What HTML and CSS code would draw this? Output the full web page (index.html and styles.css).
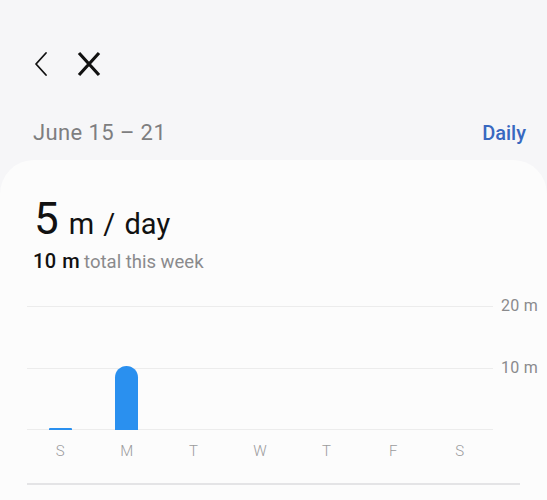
FILE: index.html
```html
<!DOCTYPE html>
<html>
<head>
<meta charset="utf-8">
<link rel="stylesheet" href="styles.css">
</head>
<body>
<div class="toolbar">
  <svg class="ic-back" width="16" height="26" viewBox="0 0 16 26"><path d="M13 2 L3 13 L13 24" fill="none" stroke="#111" stroke-width="1.8" stroke-linecap="round" stroke-linejoin="round"/></svg>
  <svg class="ic-close" width="24" height="26" viewBox="0 0 24 26"><path d="M2 2 L22 24 M22 2 L2 24" fill="none" stroke="#111" stroke-width="3.2" stroke-linecap="butt"/></svg>
</div>
<div class="range-row">
  <span class="range">June 15 – 21</span>
  <span class="mode">Daily</span>
</div>
<div class="card">
  <div class="avg"><span class="big">5</span><span class="unit">m / day</span></div>
  <div class="total"><span class="tval">10 m</span> <span class="tlabel">total this week</span></div>
  <div class="chart">
    <div class="plot">
      <div class="grid">
        <div class="gline"></div>
        <div class="gline"></div>
      </div>
      <div class="bars">
        <div class="col"><div class="bar bar-min" style="height:2px"></div></div>
        <div class="col"><div class="bar" style="height:64px"></div></div>
        <div class="col"></div>
        <div class="col"></div>
        <div class="col"></div>
        <div class="col"></div>
        <div class="col"></div>
      </div>
    </div>
    <div class="axis">
      <span>20 m</span>
      <span>10 m</span>
    </div>
  </div>
  <div class="days">
    <span>S</span><span>M</span><span>T</span><span>W</span><span>T</span><span>F</span><span>S</span>
  </div>
  <div class="divider"></div>
</div>
</body>
</html>
```
FILE: styles.css
```css
html, body {
  margin: 0;
  padding: 0;
  background: #f6f6f8;
  font-family: Roboto, "Noto Sans", sans-serif;
  width: 547px;
  height: 500px;
  overflow: hidden;
}
.toolbar {
  display: flex;
  align-items: center;
  height: 26px;
  padding: 51px 0 0 33px;
  gap: 28px;
}
.range-row {
  display: flex;
  justify-content: space-between;
  align-items: baseline;
  padding: 43px 21px 0 33px;
  height: 62px;
  box-sizing: border-box;
}
.range {
  font-size: 22px;
  color: #7e7e80;
  letter-spacing: 0.4px;
}
.mode {
  font-size: 20px;
  color: #3868c0;
  font-weight: 500;
}
.card {
  margin-top: 21px;
  background: #fcfcfc;
  border-radius: 34px 34px 0 0;
  height: 340px;
  padding-top: 39px;
  box-sizing: border-box;
}
.avg {
  padding-left: 34px;
  line-height: 40px;
  color: #111;
}
.big {
  font-size: 44px;
}
.unit {
  font-size: 29px;
  margin-left: 10px;
  word-spacing: 2px;
}
.total {
  padding-left: 33px;
  margin-top: 0;
  line-height: 24px;
}
.tval {
  font-size: 20px;
  font-weight: 500;
  color: #111;
  letter-spacing: 0.5px;
}
.tlabel {
  font-size: 18.5px;
  color: #8a8a8c;
}
.chart {
  display: flex;
  margin-top: 31px;
  padding-left: 27px;
}
.plot {
  display: grid;
  width: 466px;
  height: 124px;
}
.grid, .bars {
  grid-area: 1 / 1;
}
.grid {
  display: grid;
  grid-template-rows: 1fr 1fr;
  border-bottom: 1px solid #ececec;
}
.gline {
  border-top: 1px solid #ececec;
}
.bars {
  display: grid;
  grid-template-columns: repeat(7, 1fr);
  align-items: end;
}
.col {
  display: flex;
  justify-content: center;
  align-items: flex-end;
  height: 100%;
}
.bar {
  width: 23px;
  background: #2a90ef;
  border-radius: 12px 12px 0 0;
}
.bar-min {
  border-radius: 1px 1px 0 0;
}
.axis {
  display: flex;
  flex-direction: column;
  justify-content: space-between;
  height: 124px;
  padding-left: 8px;
}
.axis span {
  font-size: 16px;
  color: #8a8a8c;
  line-height: 18px;
  margin-top: -9px;
  letter-spacing: 0.3px;
}
.axis span + span {
  margin-bottom: 53px;
}
.days {
  display: grid;
  grid-template-columns: repeat(7, 1fr);
  width: 466px;
  margin-left: 27px;
  margin-top: 12px;
  text-align: center;
  font-size: 15px;
  color: #9b9b9d;
  font-weight: 300;
  line-height: 18px;
}
.divider {
  margin: 23px 27px 0 27px;
  height: 2px;
  background: #e4e4e6;
}
```
